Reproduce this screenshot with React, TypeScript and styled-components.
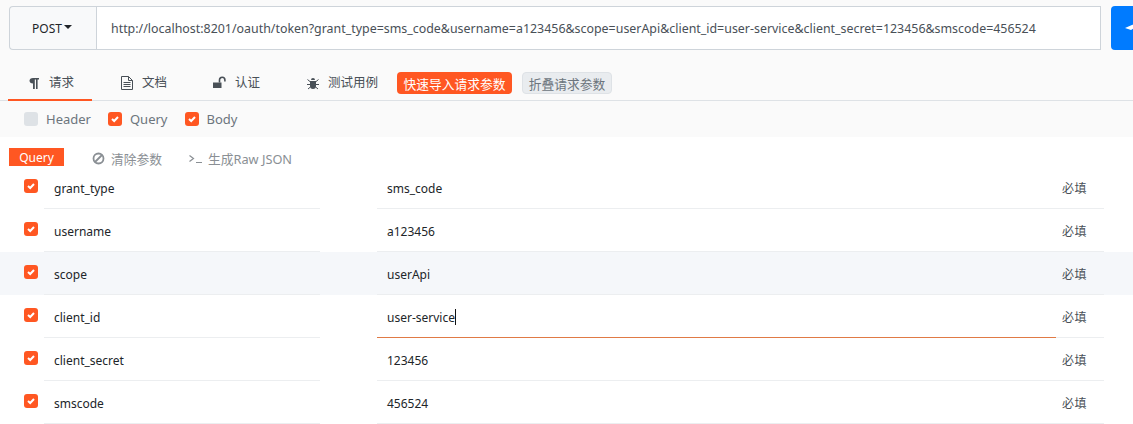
import React from "react";
import styled, { createGlobalStyle } from "styled-components";

const Global = createGlobalStyle`
  html, body { margin: 0; padding: 0; background: #fff; }
  body { font-family: "Noto Sans", "Noto Sans CJK SC", sans-serif; font-size: 12px; color: #212529; overflow: hidden; }
`;

const Page = styled.div`
  width: 1133px;
  height: 424px;
  overflow: hidden;
  background: #fff;
`;

const TopArea = styled.div`
  background: #fafafa;
  height: 137px;
  padding-top: 6px;
  box-sizing: border-box;
`;

const UrlRow = styled.div`
  display: flex;
  height: 44px;
  padding-left: 9px;
`;

const Method = styled.div`
  flex: none;
  width: 87px;
  box-sizing: border-box;
  display: flex;
  align-items: center;
  justify-content: center;
  gap: 2px;
  padding-right: 2px;
  background: #f8f9fa;
  border: 1px solid #ced4da;
  border-right: none;
  border-radius: 4px 0 0 4px;
  font-size: 12px;
  color: #212529;
`;

const Caret = styled.span`
  width: 0;
  height: 0;
  border-top: 4px solid #212529;
  border-left: 4px solid transparent;
  border-right: 4px solid transparent;
  margin-bottom: 2px;
`;

const UrlInput = styled.div`
  flex: none;
  width: 1005px;
  box-sizing: border-box;
  display: flex;
  align-items: center;
  padding-left: 14px;
  background: #fff;
  border: 1px solid #ced4da;
  font-size: 12.42px;
  color: #495057;
  white-space: nowrap;
`;

const SendButton = styled.div`
  flex: none;
  width: 60px;
  margin-left: 10px;
  display: flex;
  align-items: center;
  padding-left: 13px;
  box-sizing: border-box;
  background: #007bff;
  border-radius: 4px 0 0 4px;
`;

const Tabs = styled.div`
  display: flex;
  align-items: flex-start;
  gap: 9px;
  height: 50px;
  padding-left: 8px;
  border-bottom: 1px solid #dee2e6;
`;

const Tab = styled.div<{ $active?: boolean; $width: number }>`
  flex: none;
  width: ${(p) => p.$width}px;
  height: 51px;
  padding: 21px 0 0 19px;
  box-sizing: border-box;
  display: flex;
  align-items: flex-start;
  gap: 8px;
  font-size: 12.5px;
  line-height: 24px;
  color: #495057;
  border-bottom: 2px solid ${(p) => (p.$active ? "#ff5722" : "transparent")};
  white-space: nowrap;
`;

const TabIcon = styled.svg`
  width: 14px;
  height: 14px;
  margin-top: 5px;
  flex: none;
`;

const Badge = styled.span<{ $primary?: boolean }>`
  flex: none;
  display: inline-flex;
  align-items: center;
  justify-content: center;
  height: 22px;
  width: ${(p) => (p.$primary ? 115 : 90)}px;
  margin-top: 22px;
  margin-right: 1px;
  border-radius: 4px;
  font-size: 12.75px;
  white-space: nowrap;
  color: ${(p) => (p.$primary ? "#fff" : "#6c757d")};
  background: ${(p) => (p.$primary ? "#ff5722" : "#e9ecef")};
  border: ${(p) => (p.$primary ? "none" : "1px solid #dee2e6")};
  box-sizing: border-box;
`;

const Checks = styled.div`
  display: flex;
  align-items: center;
  height: 36px;
  padding: 0 0 1px 24px;
  box-sizing: border-box;
`;

const CheckItem = styled.label`
  display: flex;
  align-items: center;
  gap: 8px;
  margin-right: 17px;
  font-size: 13px;
  color: #6c757d;
`;

const Box = styled.span<{ $on?: boolean }>`
  width: 14px;
  height: 14px;
  flex: none;
  border-radius: 3px;
  display: flex;
  align-items: center;
  justify-content: center;
  background: ${(p) => (p.$on ? "#ff5722" : "#dee2e6")};
`;

const Check = ({ on = true }: { on?: boolean }) => (
  <Box $on={on}>
    {on && (
      <svg width="10" height="10" viewBox="0 0 10 10">
        <path d="M2 5 L4.2 7 L8 3" fill="none" stroke="#fff" strokeWidth="2" />
      </svg>
    )}
  </Box>
);

const ActionRow = styled.div`
  display: flex;
  align-items: flex-start;
  height: 29px;
  box-sizing: border-box;
  padding: 11px 0 0 9px;
`;

const QueryTag = styled.span`
  flex: none;
  width: 55px;
  height: 18px;
  display: flex;
  align-items: center;
  justify-content: center;
  background: #ff5722;
  color: #fff;
  font-size: 12px;
`;

const Action = styled.span<{ $left: number }>`
  display: flex;
  align-items: center;
  gap: 6px;
  height: 18px;
  margin-top: 1px;
  margin-left: ${(p) => p.$left}px;
  font-size: 12.75px;
  color: #8a8f94;
  white-space: nowrap;
`;

const Row = styled.div<{ $hover?: boolean }>`
  display: flex;
  height: 43px;
  background: ${(p) => (p.$hover ? "#f5f7fa" : "transparent")};
`;

const CheckCell = styled.div`
  width: 44px;
  flex: none;
  padding: 13px 0 0 24px;
  box-sizing: border-box;
`;

const Field = styled.div<{ $width: number }>`
  width: ${(p) => p.$width}px;
  flex: none;
  box-sizing: border-box;
  height: 43px;
  padding: 2px 0 0 10px;
  display: flex;
  align-items: center;
  font-size: 12px;
  color: #212529;
  border-bottom: 1px solid #eceef0;
`;

const ValueCell = styled.div`
  width: 727px;
  flex: none;
  margin-left: 57px;
  display: flex;
  height: 43px;
  border-bottom: 1px solid #eceef0;
  box-sizing: border-box;
`;

const Value = styled.div<{ $focus?: boolean }>`
  width: 679px;
  flex: none;
  height: 43px;
  box-sizing: border-box;
  padding: 2px 0 0 10px;
  display: flex;
  align-items: center;
  font-size: 12px;
  color: #212529;
  border-bottom: 1px solid ${(p) => (p.$focus ? "#e07a45" : "transparent")};
`;

const CaretBar = styled.span`
  width: 1px;
  height: 16px;
  background: #111;
`;

const Required = styled.div`
  padding: 2px 0 0 6px;
  display: flex;
  align-items: center;
  font-size: 12px;
  color: #495057;
  letter-spacing: 0.5px;
`;

const rows = [
  ["grant_type", "sms_code"],
  ["username", "a123456"],
  ["scope", "userApi"],
  ["client_id", "user-service"],
  ["client_secret", "123456"],
  ["smscode", "456524"],
];

export default function App() {
  return (
    <Page>
      <Global />
      <TopArea>
        <UrlRow>
          <Method>POST<Caret /></Method>
          <UrlInput>http://localhost:8201/oauth/token?grant_type=sms_code&username=a123456&scope=userApi&client_id=user-service&client_secret=123456&smscode=456524</UrlInput>
          <SendButton>
            <svg width="22" height="22" viewBox="0 0 22 22">
              <path d="M1 11 L22 2 L14 20 L10 14 L18 6 L7 13 Z" fill="#fff" />
            </svg>
          </SendButton>
        </UrlRow>
        <Tabs>
          <Tab $active $width={84}>
            <TabIcon viewBox="0 0 14 14"><path d="M6 2h6v1.6h-1.4V13H9V3.6H7.8V13H6V7.6C3.8 7.6 2.5 6.4 2.5 4.8S3.8 2 6 2z" fill="#495057" /></TabIcon>
            请求
          </Tab>
          <Tab $width={84}>
            <TabIcon viewBox="0 0 14 14"><path d="M1.5 .5h7l4 4v9h-11zM8.5 .5v4h4M3.5 6.5h7M3.5 8.5h7M3.5 10.5h7" fill="none" stroke="#495057" strokeWidth="1" /></TabIcon>
            文档
          </Tab>
          <Tab $width={84}>
            <TabIcon viewBox="0 0 14 14"><path d="M0 6.5h8.5v5.5H0z" fill="#495057" /><path d="M6.5 6.5V4a2.7 2.7 0 0 1 5.4 0V5.5" fill="none" stroke="#495057" strokeWidth="1.6" /></TabIcon>
            认证
          </Tab>
          <Tab $width={101}>
            <TabIcon viewBox="0 0 14 14"><path d="M4 5h6v4.5a3 3.5 0 0 1-6 0zM5 4a2 2 0 0 1 4 0z" fill="#495057" /><path d="M1.5 3.5 4.5 6M12.5 3.5 9.5 6M1 8.5h3.5M13 8.5H9.5M2 13 5 10.5M12 13 9 10.5" stroke="#495057" strokeWidth="1" /></TabIcon>
            测试用例
          </Tab>
          <Badge $primary>快速导入请求参数</Badge>
          <Badge>折叠请求参数</Badge>
        </Tabs>
        <Checks>
          <CheckItem><Check on={false} />Header</CheckItem>
          <CheckItem><Check />Query</CheckItem>
          <CheckItem><Check />Body</CheckItem>
        </Checks>
      </TopArea>
      <ActionRow>
        <QueryTag>Query</QueryTag>
        <Action $left={28}>
          <svg width="13" height="13" viewBox="0 0 13 13">
            <circle cx="6.5" cy="6.5" r="5" fill="none" stroke="#8a8f94" strokeWidth="1.8" />
            <path d="M3 10 10 3" stroke="#8a8f94" strokeWidth="1.8" />
          </svg>
          清除参数
        </Action>
        <Action $left={27}>
          <svg width="13" height="13" viewBox="0 0 13 13">
            <path d="M0.5 3.5l4 3L0.5 9.5M7 10.5h6" fill="none" stroke="#8a8f94" strokeWidth="1.2" />
          </svg>
          生成Raw JSON
        </Action>
      </ActionRow>
      {rows.map(([name, value], i) => (
        <Row key={name} $hover={i === 2}>
          <CheckCell><Check /></CheckCell>
          <Field $width={276}>{name}</Field>
          <ValueCell>
            <Value $focus={i === 3}>
              {value}
              {i === 3 && <CaretBar />}
            </Value>
            <Required>必填</Required>
          </ValueCell>
        </Row>
      ))}
    </Page>
  );
}
